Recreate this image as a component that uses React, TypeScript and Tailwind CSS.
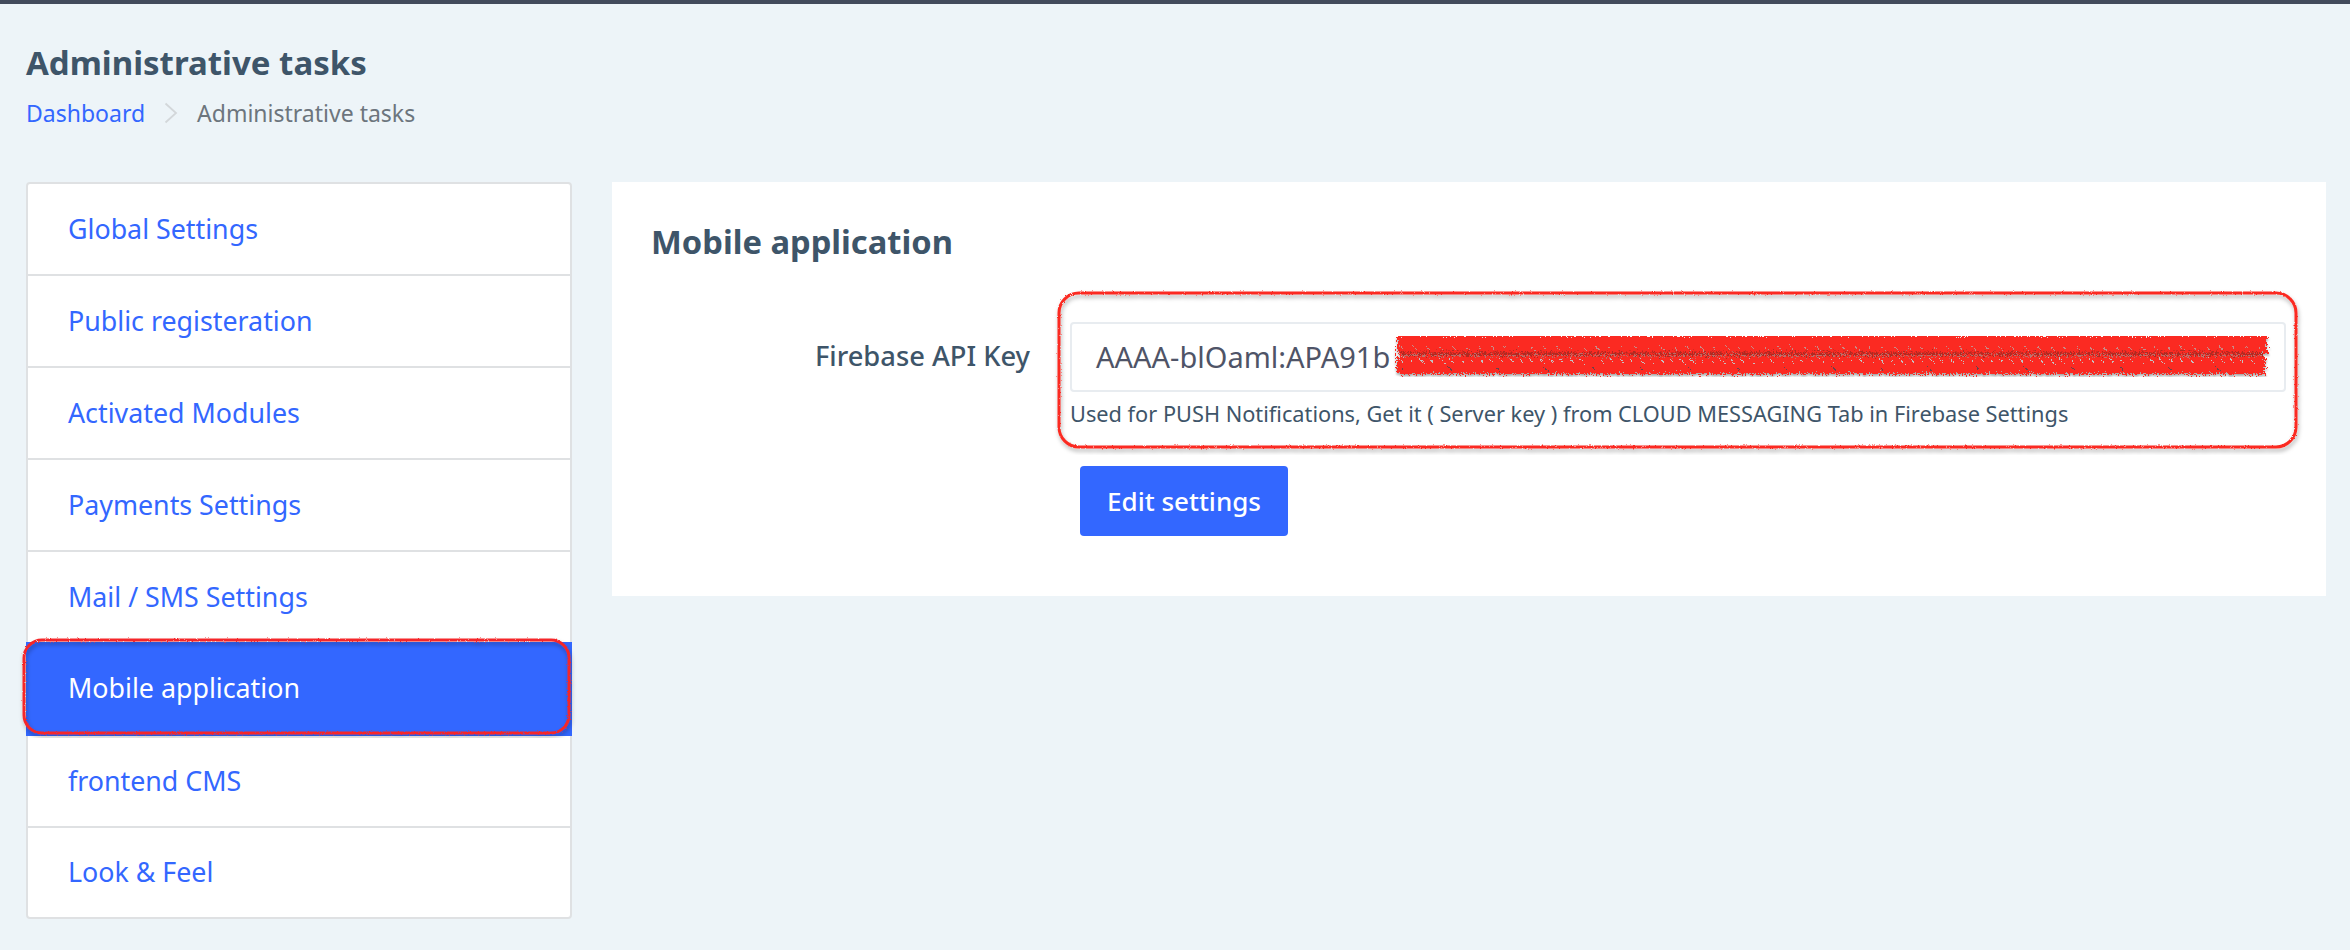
const rows = [
  "Global Settings",
  "Public registeration",
  "Activated Modules",
  "Payments Settings",
  "Mail / SMS Settings",
  "Mobile application",
  "frontend CMS",
  "Look & Feel",
];

function Filters() {
  return (
    <svg width="0" height="0" className="absolute">
      <defs>
        <filter id="rough" x="-5%" y="-5%" width="110%" height="110%">
          <feTurbulence type="fractalNoise" baseFrequency="0.9" numOctaves="2" seed="4" result="n" />
          <feDisplacementMap in="SourceGraphic" in2="n" scale="2.5" result="d" />
          <feDropShadow in="d" dx="1" dy="3" stdDeviation="2" floodColor="#000" floodOpacity="0.3" />
        </filter>
        <filter id="scribble" x="-2%" y="-30%" width="104%" height="160%">
          <feTurbulence type="fractalNoise" baseFrequency="0.7" numOctaves="3" seed="9" result="n" />
          <feDisplacementMap in="SourceGraphic" in2="n" scale="11" result="d" />
          <feDropShadow in="d" dx="0" dy="2" stdDeviation="1.2" floodColor="#000" floodOpacity="0.35" />
        </filter>
      </defs>
    </svg>
  );
}

function Row({ label, index }: { label: string; index: number }) {
  if (index === 5) {
    return (
      <div className="relative z-10 -mx-[2px] -mt-[2px] flex h-[94px] items-center bg-[#3367ff] pb-[1px] pl-[42px] text-white">
        {label}
        <svg className="absolute -left-[3px] -top-[3px] overflow-visible" width="547" height="95" fill="none">
          <rect x="1" y="1" width="545" height="93" rx="18" stroke="#f5282a" strokeWidth="3" filter="url(#rough)" />
        </svg>
      </div>
    );
  }
  const height = index === 7 ? "h-[89px]" : "h-[92px] border-b-2";
  return <div className={`flex items-center border-[#dfe1e3] pl-[40px] text-[#3367ff] ${height}`}>{label}</div>;
}

export default function App() {
  return (
    <div className="h-[950px] w-[2350px] overflow-hidden bg-[#edf4f8] font-['Noto_Sans','Lato',sans-serif] text-[#3e5569]">
      <Filters />
      <div className="h-1 bg-[#424b5c]" />
      <header className="h-[178px] pl-[26px] pt-[39px]">
        <h1 className="text-[33px] font-bold leading-[40px]">Administrative tasks</h1>
        <nav className="mt-[13px] flex items-center text-[23px] leading-[34px]">
          <span className="text-[#3367ff]">Dashboard</span>
          <svg className="mx-[19px]" width="14" height="22" viewBox="0 0 14 22" fill="none">
            <path d="M1.5 1.5 12 11 1.5 20.5" stroke="#d3d7da" strokeWidth="1.8" />
          </svg>
          <span className="text-[#6c757d]">Administrative tasks</span>
        </nav>
      </header>

      <div className="flex items-start pl-[26px]">
        <aside className="w-[546px] rounded border-2 border-[#dfe1e3] bg-white text-[26.8px]">
          {rows.map((r, i) => (
            <Row key={r} label={r} index={i} />
          ))}
        </aside>

        <main className="ml-[40px] h-[414px] w-[1714px] bg-white pl-[39px] pt-[38px]">
          <h2 className="text-[32.7px] font-bold leading-[44px]">Mobile application</h2>
          <div className="mt-[58px] flex items-start">
            <label className="flex h-[70px] w-[379px] items-center justify-end pb-[2px] text-[27.3px] font-medium">
              Firebase API Key
            </label>
            <div className="relative ml-[40px] w-[1216px]">
              <div className="flex h-[70px] items-center rounded border-2 border-[#e8ecf0] pl-[24px] text-[29px] text-[#4f5467]">
                AAAA-blOaml:APA91b
              </div>
              <p className="mt-[6px] text-[21.75px] leading-[32px]">
                Used for PUSH Notifications, Get it ( Server key ) from CLOUD MESSAGING Tab in Firebase Settings
              </p>
              <svg className="absolute left-[325px] top-[14px] overflow-visible" width="874" height="36" fill="none">
                <g filter="url(#scribble)">
                  <path d="M2 8H872" stroke="#fb2c20" strokeWidth="18" />
                  <path d="M2 29H870" stroke="#fb2c20" strokeWidth="18" />
                  <path d="M6 18H868" stroke="#b02a20" strokeWidth="3" />
                  <path d="M6 12H868" stroke="#b9a9a9" strokeWidth="1.5" strokeDasharray="2 11" />
                  <path d="M6 25H868" stroke="#c4c0c0" strokeWidth="2" strokeDasharray="2 8" />
                  <path d="M6 33H868" stroke="#3e4a55" strokeWidth="1.5" strokeDasharray="2 46" />
                </g>
              </svg>
              <svg className="absolute -left-[12px] -top-[30px] overflow-visible" width="1239" height="156" fill="none">
                <rect x="1" y="1" width="1237" height="154" rx="20" stroke="#fb2c20" strokeWidth="3" filter="url(#rough)" />
              </svg>
              <button className="ml-[10px] mt-[36px] h-[70px] w-[208px] rounded bg-[#3367ff] text-[26px] font-medium text-white">
                Edit settings
              </button>
            </div>
          </div>
        </main>
      </div>
    </div>
  );
}
